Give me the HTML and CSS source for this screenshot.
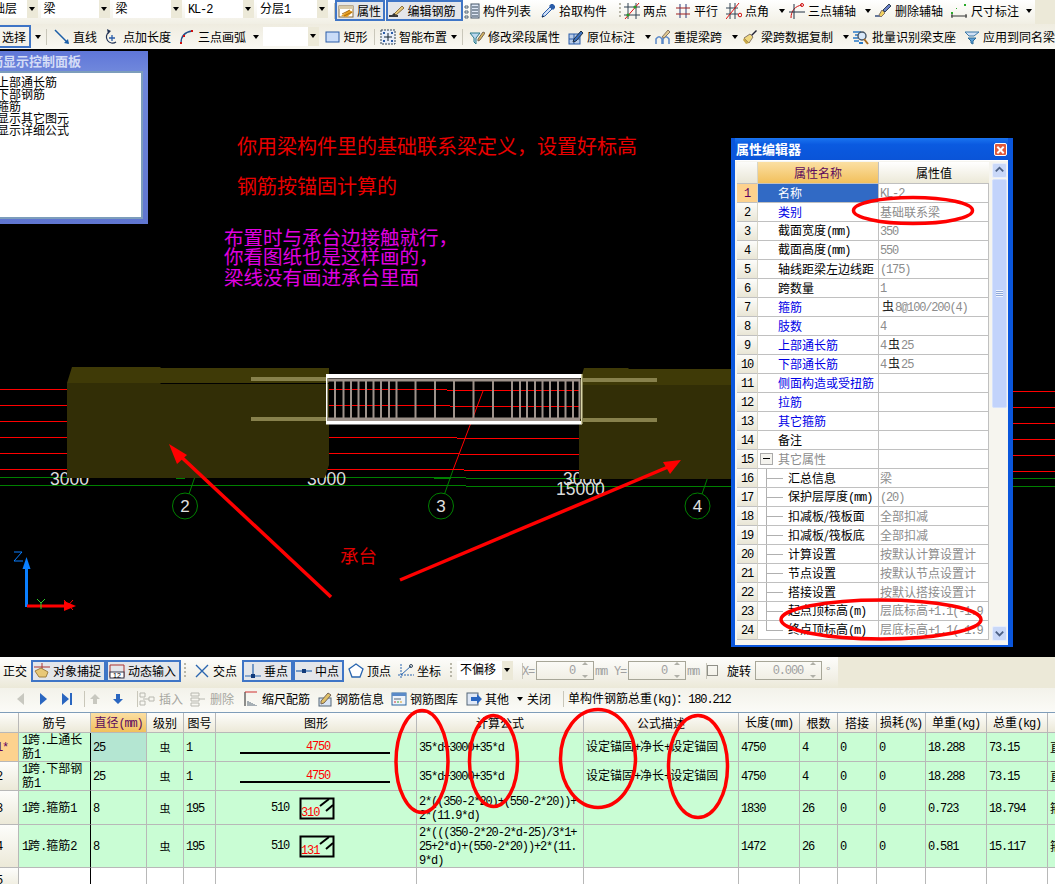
FILE: index.html
```html
<!DOCTYPE html>
<html lang="zh">
<head>
<meta charset="utf-8">
<title>钢筋编辑</title>
<link rel="stylesheet" href="styles.css">
</head>
<body>
<div class="page">

<div class="bar bar1"><div class="tools tools1">
  <div class="combo"><span class="combo-text shift">基础层</span><i class="drop"></i></div>
  <div class="combo"><span class="combo-text">梁</span><i class="drop"></i></div>
  <div class="combo"><span class="combo-text">梁</span><i class="drop"></i></div>
  <div class="combo"><span class="combo-text"><span class="n">KL-2</span></span><i class="drop"></i></div>
  <div class="combo"><span class="combo-text">分层<span class="n">1</span></span><i class="drop"></i></div>
  <i class="sep"></i>
  <div class="ti btn"><svg class="ic" viewBox="0 0 16 16"><rect x="1" y="3" width="14" height="11" fill="#fff" stroke="#8a6d3b"/><path d="M1 3h14v3H1z" fill="#d8c9a8"/><path d="M3 13l8-6 4 2-6 5z" fill="#e8a020"/><path d="M4 11l8-4M6 13l8-4" stroke="#a86a10"/></svg><span>属性</span></div>
  <div class="ti btn"><svg class="ic" viewBox="0 0 16 16"><path d="M0 13h9" stroke="#000" stroke-width="1.5"/><path d="M5 11l8-8 2 2-8 7z" fill="#e8c878" stroke="#8a7040"/><path d="M3 12l2-2 2 2z" fill="#333"/></svg><span>编辑钢筋</span></div>
  <div class="ti"><svg class="ic" viewBox="0 0 16 16"><path d="M1 3h3v2H1zM1 8h3v2H1zM1 13h3v2H1z" fill="none" stroke="#567"/><rect x="7" y="1" width="8" height="14" fill="#dfe8f6" stroke="#456"/><path d="M8 4h6M8 7h6M8 10h6M8 13h6" stroke="#345"/></svg><span>构件列表</span></div>
  <div class="ti"><svg class="ic" viewBox="0 0 16 16"><path d="M2 14l1-3 7-7 2 2-7 7z" fill="#cfe0f8" stroke="#2a5ca8"/><path d="M9 3l2-2h2l2 2v2l-2 2z" fill="#2a5ca8"/><path d="M2 14l2-1" stroke="#123"/></svg><span>拾取构件</span></div>
  <i class="grip"></i>
  <div class="ti"><svg class="ic" viewBox="0 0 16 16"><path d="M4 0v16M12 0v16M0 4h16M0 12h16" stroke="#345" fill="none"/><path d="M1 16L15 0" stroke="#e01010"/><circle cx="4" cy="12" r="1.6" fill="#2a9a2a"/><circle cx="11" cy="4" r="1.6" fill="#2a9a2a"/></svg><span>两点</span></div>
  <div class="ti"><svg class="ic" viewBox="0 0 16 16"><path d="M5 1v14M11 1v14" stroke="#2a3a7a" fill="none"/><path d="M1 5h14M1 11h14" stroke="#a02020" fill="none"/></svg><span>平行</span></div>
  <div class="ti"><svg class="ic" viewBox="0 0 16 16"><path d="M4 0v16M9 0v16M0 5h12M0 11h12" stroke="#345" fill="none"/><path d="M0 16L13 0" stroke="#e01010"/><circle cx="14" cy="12" r="1.8" fill="none" stroke="#d01010"/></svg><span>点角</span></div>
  <i class="caret"></i>
  <div class="ti"><svg class="ic" viewBox="0 0 16 16"><path d="M2 15C2 8 6 3 13 2" stroke="#d01010" fill="none"/><path d="M5 1v15M0 9h16" stroke="#234" fill="none"/><circle cx="13" cy="2" r="1.5" fill="none" stroke="#d01010"/></svg><span>三点辅轴</span></div>
  <i class="caret"></i>
  <div class="ti"><svg class="ic ic-w" viewBox="0 0 16 16"><path d="M0 13h7" stroke="#679" stroke-width="2"/><path d="M4 12l3-5 3 3-4 4z" fill="#f0d060" stroke="#876"/><path d="M8 7l6-6 2 2-6 6z" fill="#6a80c8" stroke="#345"/></svg><span>删除辅轴</span></div>
  <div class="ti"><svg class="ic ic-w" viewBox="0 0 16 16"><path d="M0 13h16M1 11v4M15 11v4" stroke="#333" fill="none"/><path d="M0 9h2v2H0zM13 1h2v2h-2zM5 5h1v1H5z" fill="#2aaa2a"/></svg><span>尺寸标注</span></div>
  <i class="caret"></i>
</div></div>

<div class="bar bar2"><div class="tools tools2">
  <div class="ti btn btn-sel"><span>选择</span></div>
  <i class="caret"></i>
  <i class="sep"></i>
  <div class="ti"><svg class="ic" viewBox="0 0 16 16"><path d="M1 1l13 13" stroke="#1c5fa8" stroke-width="1.5"/><path d="M15 15l-1-5-4 4z" fill="#1c5fa8"/></svg><span>直线</span></div>
  <div class="ti"><svg class="ic" viewBox="0 0 16 16"><path d="M12 13A6 6 0 1 1 5 3" fill="none" stroke="#235" stroke-width="1.2"/><path d="M3 0l4 2-3 3z" fill="#235"/><path d="M8 6v6M5 9h6" stroke="#2a5ca8" stroke-width="1.3"/></svg><span>点加长度</span></div>
  <div class="ti"><svg class="ic" viewBox="0 0 16 16"><path d="M2 14C2 7 6 3 13 2" fill="none" stroke="#23508a" stroke-width="1.3"/><rect x="1" y="13" width="2" height="2" fill="#d01010"/><rect x="12" y="1" width="2" height="2" fill="#d01010"/><rect x="4" y="6" width="2" height="2" fill="#d01010"/></svg><span>三点画弧</span></div>
  <i class="caret"></i>
  <div class="combo combo-mid"><span class="combo-text"></span><i class="drop"></i></div>
  <div class="ti"><svg class="ic" viewBox="0 0 16 16"><rect x="1" y="3" width="13" height="10" fill="#c9dcf8" stroke="#2a5ca8"/></svg><span>矩形</span></div>
  <i class="sep"></i>
  <div class="ti"><svg class="ic" viewBox="0 0 16 16"><rect x="1" y="1" width="14" height="14" fill="#e8eef8" stroke="#345" stroke-dasharray="2 1"/><path d="M8 4v8M4 8h8" stroke="#123"/><path d="M3 3h2v2H3zM11 3h2v2h-2zM3 11h2v2H3zM11 11h2v2h-2z" fill="#2a5ca8"/></svg><span>智能布置</span></div>
  <i class="caret"></i>
  <i class="sep"></i>
  <div class="ti"><svg class="ic" viewBox="0 0 16 16"><path d="M1 4h10L7 9v6l-2-2V9z" fill="#bcd8f0" stroke="#2a7a8a"/><path d="M9 10l5-7 2 1-5 7-2 1z" fill="#d8b860" stroke="#765"/></svg><span>修改梁段属性</span></div>
  <div class="ti"><svg class="ic" viewBox="0 0 16 16"><rect x="1" y="5" width="11" height="10" fill="#b8cce8" stroke="#2a5ca8"/><path d="M1 10h11M6 5v10" stroke="#2a5ca8"/><path d="M6 10l7-8 2 2-7 8-3 1z" fill="#3a70c0" stroke="#234"/></svg><span>原位标注</span></div>
  <i class="caret"></i>
  <div class="ti"><svg class="ic" viewBox="0 0 16 16"><path d="M1 15v-5c2-3 4-3 6 0v5M8 15v-5c2-3 4-3 6 0v5" fill="none" stroke="#5a88c8" stroke-width="1.5"/><path d="M7 8l6-7 2 2-6 6z" fill="#e0c890" stroke="#876"/></svg><span>重提梁跨</span></div>
  <i class="caret"></i>
  <div class="ti"><svg class="ic" viewBox="0 0 16 16"><path d="M9 6l5-5 1 1-5 5z" fill="#223"/><path d="M2 9l6-4 3 3-4 6z" fill="#f0d880" stroke="#876"/><path d="M2 9l5 5-3 1-3-4z" fill="#c8a848"/></svg><span>梁跨数据复制</span></div>
  <i class="caret"></i>
  <div class="ti"><svg class="ic" viewBox="0 0 16 16"><path d="M0 3h8M2 6h5M0 9h5M1 12h5" stroke="#2a7ac8" stroke-width="1.4"/><circle cx="9" cy="7" r="4" fill="#d8e8f8" stroke="#456" stroke-width="1.4"/><path d="M11 10l4 5" stroke="#a86a20" stroke-width="2"/><path d="M6 14h4" stroke="#2a7ac8" stroke-width="2"/></svg><span>批量识别梁支座</span></div>
  <div class="ti"><svg class="ic" viewBox="0 0 16 16"><path d="M1 3h14l-5 4H5z" fill="#cfe0f4" stroke="#3a78a8"/><path d="M4 9h8l-3 3v3l-2-1v-2z" fill="#5aa0d8" stroke="#2a6a98"/></svg><span>应用到同名梁</span></div>
</div></div>

<div class="canvas">
  <svg class="scene" viewBox="0 49 1055 607">
    <g stroke="#f00" fill="none">
      <path d="M0 389.500h68M0 405.500h68M0 421.500h68M0 437.500h68M0 453.500h68M0 469.500h68"/>
      <path d="M329 389.500h118M447 390.500h132M329 405.500h121M450 406.500h129"/>
      <path d="M329 437.500h128M457 438.500h122M329 453.500h131M460 454.500h119M326 469.500h138M464 470.500h115"/>
      <path d="M1013 391.500h42M1013 407.500h42M1013 423.500h42M1013 439.500h42M1013 455.500h42M1013 471.500h42"/>
      <path d="M483 391L453 470"/>
    </g>
    <g stroke="#008000" fill="none">
      <path d="M0 477.500h466M466 478.500h589M0 485.500h466M466 486.500h589"/>
      <path d="M453 470L444.500 494M194.500 478L189 494M707.500 478L702 494"/>
      <ellipse cx="185" cy="506" rx="12.500" ry="13"/>
      <ellipse cx="441" cy="506" rx="12.500" ry="13"/>
      <ellipse cx="697.500" cy="506" rx="12.500" ry="13"/>
      <path d="M176 478h9M434 478h17M689 478h9" stroke-width="2"/>
    </g>
    <g class="dim">
      <text x="50" y="485">3000</text>
      <text x="307" y="485">3000</text>
      <text x="563" y="485">3000</text>
      <text x="556" y="495">15000</text>
    </g>
    <g class="axisnum">
      <text x="185" y="512">2</text>
      <text x="441" y="512">3</text>
      <text x="697.500" y="512">4</text>
    </g>
    <path d="M67 383L72 367H160L161 368H329V383Z" fill="#3f3a07"/>
    <path d="M67 383H160L161 384H329V465L324.500 478H67Z" fill="#322e06"/>
    <path d="M579 385L584 368H628L629 369H731V385Z" fill="#3f3a07"/>
    <path d="M579 385H731V479H579Z" fill="#322e06"/>
    <path d="M251 377h75v4h-75zM251 417h75v4h-75z" fill="#87814c"/>
    <path d="M583 378h74v4h-74zM583 418h74v4h-74z" fill="#87814c"/>
    <g stroke="#9d928a" stroke-width="2">
      <path d="M335 379v40M343.500 379v40M351 379v40M358.500 379v40M366 379v40M373.500 379v40M381 379v40M389 379v40M396.500 379v40M415.500 379v40M435 379v40M454 379v40M473.500 379v40M493 379v40M512 379v40M520 379v40M527 379v40M535 379v40M542.500 379v40M550 379v40M558 379v40M565.500 379v40M573 379v40M579.500 379v40"/>
    </g>
    <path d="M328 378.500h252v3h-252zM328 417.500h252v3.500h-252z" fill="#9d928a"/>
    <path d="M326 374h256v4h-256zM326 421h256v3.500h-256z" fill="#fff"/>
    <path d="M326 374h1.500v50h-1.500z" fill="#fff"/>
    <path d="M581 374h1.500v50h-1.500z" fill="#d8d4a8"/>
    <path class="arrow" d="M331 597L176 452"/>
    <path class="arrow" d="M400 580L668 467"/>
    <path class="head" d="M169 444L187 455L177 464Z"/>
    <path class="head" d="M681 460L663 462L670 474Z"/>
    <text class="red-note" x="237" y="154">你用梁构件里的基础联系梁定义，设置好标高</text>
    <text class="red-note" x="237" y="194">钢筋按锚固计算的</text>
    <text class="pink-note" x="224" y="245">布置时与承台边接触就行，</text>
    <text class="pink-note" x="224" y="264">你看图纸也是这样画的，</text>
    <text class="pink-note" x="224" y="285">梁线没有画进承台里面</text>
    <text class="red-small" x="340" y="563">承台</text>
    <path d="M26.500 607V565" stroke="#0a7fff" stroke-width="3"/>
    <path d="M26.500 557l-4 12h8z" fill="#0a7fff"/>
    <path d="M27 606h40" stroke="#f00" stroke-width="3"/>
    <path d="M76 606l-12-5v10z" fill="#f00"/>
    <path d="M14 552h8l-8 9h9" stroke="#0a7fff" fill="none"/>
    <path d="M37 599l4 4 4-4M41 603v6" stroke="#2ad02a" fill="none"/>
    <path d="M64 600l9 10M73 600l-9 10" stroke="#f00" fill="none"/>
  </svg>

  <aside class="rebar-panel">
    <h2 class="rebar-title">筋显示控制面板</h2>
    <ul class="rebar-list">
      <li>上部通长筋</li><li>下部钢筋</li><li>箍筋</li><li>显示其它图元</li><li>显示详细公式</li>
    </ul>
  </aside>

  <section class="props">
    <header class="props-title"><span>属性编辑器</span><i class="close"></i></header>
    <div class="props-body">
      <table class="ptable">
        <thead><tr><th class="pn"></th><th class="phead-on">属性名称</th><th class="phead">属性值</th></tr></thead>
        <tbody>
          <tr><th class="pn pn-on"><span class="n">1</span></th><td class="name sel">名称</td><td class="val"><span class="n">KL-2</span></td></tr>
          <tr><th class="pn"><span class="n">2</span></th><td class="name blue">类别</td><td class="val">基础联系梁</td></tr>
          <tr><th class="pn"><span class="n">3</span></th><td class="name">截面宽度<span class="n">(mm)</span></td><td class="val"><span class="n">350</span></td></tr>
          <tr><th class="pn"><span class="n">4</span></th><td class="name">截面高度<span class="n">(mm)</span></td><td class="val"><span class="n">550</span></td></tr>
          <tr><th class="pn"><span class="n">5</span></th><td class="name">轴线距梁左边线距</td><td class="val"><span class="n">(175)</span></td></tr>
          <tr><th class="pn"><span class="n">6</span></th><td class="name">跨数量</td><td class="val"><span class="n">1</span></td></tr>
          <tr><th class="pn"><span class="n">7</span></th><td class="name blue">箍筋</td><td class="val"><b class="bar-sym">虫</b><span class="n">8@100/200(4)</span></td></tr>
          <tr><th class="pn"><span class="n">8</span></th><td class="name blue">肢数</td><td class="val"><span class="n">4</span></td></tr>
          <tr><th class="pn"><span class="n">9</span></th><td class="name blue">上部通长筋</td><td class="val"><span class="n">4</span><b class="bar-sym">虫</b><span class="n">25</span></td></tr>
          <tr><th class="pn"><span class="n">10</span></th><td class="name blue">下部通长筋</td><td class="val"><span class="n">4</span><b class="bar-sym">虫</b><span class="n">25</span></td></tr>
          <tr><th class="pn"><span class="n">11</span></th><td class="name blue">侧面构造或受扭筋</td><td class="val"></td></tr>
          <tr><th class="pn"><span class="n">12</span></th><td class="name blue">拉筋</td><td class="val"></td></tr>
          <tr><th class="pn"><span class="n">13</span></th><td class="name blue">其它箍筋</td><td class="val"></td></tr>
          <tr><th class="pn"><span class="n">14</span></th><td class="name">备注</td><td class="val"></td></tr>
          <tr><th class="pn"><span class="n">15</span></th><td class="name group"><i class="minus"></i>其它属性</td><td class="val"></td></tr>
          <tr><th class="pn"><span class="n">16</span></th><td class="name tree">汇总信息</td><td class="val">梁</td></tr>
          <tr><th class="pn"><span class="n">17</span></th><td class="name tree">保护层厚度<span class="n">(mm)</span></td><td class="val"><span class="n">(20)</span></td></tr>
          <tr><th class="pn"><span class="n">18</span></th><td class="name tree">扣减板/筏板面</td><td class="val">全部扣减</td></tr>
          <tr><th class="pn"><span class="n">19</span></th><td class="name tree">扣减板/筏板底</td><td class="val">全部扣减</td></tr>
          <tr><th class="pn"><span class="n">20</span></th><td class="name tree">计算设置</td><td class="val">按默认计算设置计</td></tr>
          <tr><th class="pn"><span class="n">21</span></th><td class="name tree">节点设置</td><td class="val">按默认节点设置计</td></tr>
          <tr><th class="pn"><span class="n">22</span></th><td class="name tree">搭接设置</td><td class="val">按默认搭接设置计</td></tr>
          <tr><th class="pn"><span class="n">23</span></th><td class="name tree">起点顶标高<span class="n">(m)</span></td><td class="val">层底标高<span class="n">+1.1(-1.9</span></td></tr>
          <tr><th class="pn"><span class="n">24</span></th><td class="name tree tree-last">终点顶标高<span class="n">(m)</span></td><td class="val">层底标高<span class="n">+1.1(-1.9</span></td></tr>
        </tbody>
      </table>
      <div class="scroll">
        <div class="sbtn"><svg viewBox="0 0 14 14"><path d="M3 8l4-4 4 4" fill="none" stroke="#4d6185" stroke-width="2"/></svg></div>
        <div class="thumb"><i></i></div>
        <div class="sbtn sbtn-end"><svg viewBox="0 0 14 14"><path d="M3 5l4 4 4-4" fill="none" stroke="#4d6185" stroke-width="2"/></svg></div>
      </div>
    </div>
  </section>
</div>

<div class="bar bar3"><div class="tools tools3">
  <div class="ti pad"><span>正交</span></div>
  <div class="ti btn"><svg class="ic" viewBox="0 0 16 16"><path d="M8 0v14M0 4h16" stroke="#a33" fill="none"/><path d="M1 8l6-3 7 4-2 5H5z" fill="#e8c878" stroke="#a08040"/></svg><span>对象捕捉</span></div>
  <div class="ti btn"><svg class="ic" viewBox="0 0 16 16"><path d="M1 2h14M1 2v12M15 2v12" stroke="#a33" fill="none"/><rect x="1" y="9" width="14" height="6" fill="#fff" stroke="#334"/><text class="ic-text" x="4" y="14.500">12</text></svg><span>动态输入</span></div>
  <i class="grip"></i>
  <div class="ti"><svg class="ic" viewBox="0 0 16 16"><path d="M2 2l12 12M14 2L2 14" stroke="#2a66b0" stroke-width="1.4"/></svg><span>交点</span></div>
  <div class="ti btn"><svg class="ic" viewBox="0 0 16 16"><path d="M0 13h16M8 1v12" stroke="#2a66b0" stroke-width="1.2"/><rect x="6" y="11" width="4" height="4" fill="#123a7a"/></svg><span>垂点</span></div>
  <div class="ti btn btn-narrow"><svg class="ic" viewBox="0 0 16 16"><path d="M0 8h16" stroke="#2a66b0" stroke-width="1.2"/><rect x="6" y="6" width="4" height="4" fill="#123a7a"/></svg><span>中点</span></div>
  <div class="ti"><svg class="ic" viewBox="0 0 16 16"><path d="M8 1l7 5-3 8H4L1 6z" fill="#fff" stroke="#2a66b0" stroke-width="1.3"/></svg><span>顶点</span></div>
  <div class="ti"><svg class="ic" viewBox="0 0 16 16"><path d="M3 1v14M0 12h16" stroke="#2a66b0" stroke-dasharray="2 1" fill="none"/><path d="M3 12l10-9" stroke="#2a66b0" fill="none"/><circle cx="13" cy="3" r="1.500" fill="none" stroke="#345"/></svg><span>坐标</span></div>
  <i class="grip"></i>
  <div class="combo combo-mid"><span class="combo-text">不偏移</span><i class="drop"></i></div>
  <i class="sep"></i>
  <span class="gray"><span class="n">X=</span></span>
  <div class="spin"><span class="n">0</span><i class="spin-btn"></i></div>
  <span class="gray"><span class="n">mm</span></span>
  <span class="gray"><span class="n">Y=</span></span>
  <div class="spin"><span class="n">0</span><i class="spin-btn"></i></div>
  <span class="gray"><span class="n">mm</span></span>
  <i class="sep"></i>
  <i class="check"></i>
  <span class="label">旋转</span>
  <div class="spin"><span class="n">0.000</span><i class="spin-btn"></i></div>
  <span class="gray deg">°</span>
</div></div>

<div class="bar bar4"><div class="tools tools4">
  <svg class="nav" viewBox="0 0 10 12"><path d="M8 0v12L1 6z" fill="#c8c8c0"/></svg>
  <svg class="nav" viewBox="0 0 10 12"><path d="M1 0v12l7-6z" fill="#2a66c0"/></svg>
  <svg class="nav" viewBox="0 0 10 12"><path d="M0 0v12l7-6zM8 0h2v12H8z" fill="#2a66c0"/></svg>
  <i class="sep"></i>
  <svg class="nav" viewBox="0 0 10 12"><path d="M5 1l5 5H7v5H3V6H0z" fill="#c8c8c0"/></svg>
  <svg class="nav" viewBox="0 0 10 12"><path d="M5 11l5-5H7V1H3v5H0z" fill="#2a66c0"/></svg>
  <i class="sep"></i>
  <div class="ti off"><svg class="ic ic-l" viewBox="0 0 16 16"><path d="M1 2h5v4H1zM1 10h5v4H1z" fill="none" stroke="#b8b8b0"/><path d="M4 8h6M10 6h5v4h-5z" fill="none" stroke="#b8b8b0"/></svg><span>插入</span></div>
  <div class="ti off"><svg class="ic ic-l" viewBox="0 0 16 16"><path d="M1 2h8v3H1zM1 7h8v3H1zM1 12h8v3H1z" fill="none" stroke="#b8b8b0"/><path d="M9 8h6" stroke="#b8b8b0"/></svg><span>删除</span></div>
  <div class="ti"><svg class="ic" viewBox="0 0 16 16"><path d="M2 1v14" stroke="#222"/><path d="M2 1h12" stroke="#d03030"/><path d="M5 15v-5M7 15v-4M9 15v-3M11 15v-2M13 15v-1" stroke="#567"/></svg><span>缩尺配筋</span></div>
  <div class="ti"><svg class="ic" viewBox="0 0 16 16"><rect x="2" y="7" width="12" height="8" fill="#d8e4f4" stroke="#567"/><path d="M4 10l7-8 3 2-7 8-3 1z" fill="#e0c068" stroke="#765"/></svg><span>钢筋信息</span></div>
  <div class="ti"><svg class="ic" viewBox="0 0 16 16"><rect x="1" y="2" width="14" height="12" fill="#eef3fa" stroke="#2a66a0"/><path d="M1 2h14v3H1z" fill="#5a8ac8"/><path d="M3 8h7" stroke="#567"/><path d="M3 11h2" stroke="#c33"/><path d="M6 11h2" stroke="#3a3"/><path d="M9 11h2" stroke="#e0a020"/></svg><span>钢筋图库</span></div>
  <div class="ti"><svg class="ic" viewBox="0 0 16 16"><rect x="1" y="2" width="11" height="12" fill="#dfe8f6" stroke="#567"/><path d="M5 6h6V3l5 5-5 5v-3H5z" fill="#2a66c0"/></svg><span>其他</span></div>
  <i class="caret"></i>
  <span class="label">关闭</span>
  <i class="sep"></i>
  <span class="label">单构件钢筋总重<span class="n">(kg)</span>：<span class="n">180.212</span></span>
</div></div>

<table class="grid">
  <colgroup><col class="c0"><col class="c1"><col class="c2"><col class="c3"><col class="c4"><col class="c5"><col class="c6"><col class="c7"><col class="c8"><col class="c9"><col class="c10"><col class="c11"><col class="c12"><col class="c13"><col class="c14"></colgroup>
  <thead><tr class="r-h">
    <th></th><th>筋号</th><th class="on">直径<span class="n">(mm)</span></th><th>级别</th><th>图号</th><th>图形</th><th>计算公式</th><th>公式描述</th><th>长度<span class="n">(mm)</span></th><th>根数</th><th>搭接</th><th>损耗<span class="n">(%)</span></th><th>单重<span class="n">(kg)</span></th><th>总重<span class="n">(kg)</span></th><th></th>
  </tr></thead>
  <tbody>
    <tr class="r1">
      <th class="rh rh-on"><span class="n">1*</span></th><td class="freeze"><span class="n">1</span>跨<span class="n">.</span>上通长<br>筋<span class="n">1</span></td><td class="cur"><span class="n">25</span></td><td class="mid bar-sym-cell">虫</td><td><span class="n">1</span></td>
      <td class="fig"><div class="fig-line"><span class="n fig-len">4750</span></div></td>
      <td class="f"><span class="n">35*d+3000+35*d</span></td><td class="desc">设定锚固<span class="n">+</span>净长<span class="n">+</span>设定锚固</td><td><span class="n">4750</span></td><td><span class="n">4</span></td><td><span class="n">0</span></td><td><span class="n">0</span></td><td><span class="n">18.288</span></td><td><span class="n">73.15</span></td><td class="last">直筋</td>
    </tr>
    <tr class="r2">
      <th class="rh"><span class="n">2</span></th><td class="freeze"><span class="n">1</span>跨<span class="n">.</span>下部钢<br>筋<span class="n">1</span></td><td><span class="n">25</span></td><td class="mid bar-sym-cell">虫</td><td><span class="n">1</span></td>
      <td class="fig"><div class="fig-line"><span class="n fig-len">4750</span></div></td>
      <td class="f"><span class="n">35*d+3000+35*d</span></td><td class="desc">设定锚固<span class="n">+</span>净长<span class="n">+</span>设定锚固</td><td><span class="n">4750</span></td><td><span class="n">4</span></td><td><span class="n">0</span></td><td><span class="n">0</span></td><td><span class="n">18.288</span></td><td><span class="n">73.15</span></td><td class="last">直筋</td>
    </tr>
    <tr class="r3">
      <th class="rh"><span class="n">3</span></th><td class="freeze"><span class="n">1</span>跨<span class="n">.</span>箍筋<span class="n">1</span></td><td><span class="n">8</span></td><td class="mid bar-sym-cell">虫</td><td><span class="n">195</span></td>
      <td class="fig"><div class="stir"><span class="n stir-num">510</span><svg class="stir-svg" viewBox="0 0 36 24"><path d="M1.500 2.500h33v20h-33z" fill="none" stroke="#000" stroke-width="2"/><path d="M21 10l9-7M27 15l7-6" stroke="#000" stroke-width="2" fill="none"/><text class="stir-red" x="2" y="20">310</text></svg></div></td>
      <td class="f"><span class="n">2*((350-2*20)+(550-2*20))+<br>2*(11.9*d)</span></td><td></td><td><span class="n">1830</span></td><td><span class="n">26</span></td><td><span class="n">0</span></td><td><span class="n">0</span></td><td><span class="n">0.723</span></td><td><span class="n">18.794</span></td><td class="last">箍筋</td>
    </tr>
    <tr class="r4">
      <th class="rh"><span class="n">4</span></th><td class="freeze"><span class="n">1</span>跨<span class="n">.</span>箍筋<span class="n">2</span></td><td><span class="n">8</span></td><td class="mid bar-sym-cell">虫</td><td><span class="n">195</span></td>
      <td class="fig"><div class="stir"><span class="n stir-num">510</span><svg class="stir-svg" viewBox="0 0 36 24"><path d="M1.500 2.500h33v20h-33z" fill="none" stroke="#000" stroke-width="2"/><path d="M21 10l9-7M27 15l7-6" stroke="#000" stroke-width="2" fill="none"/><text class="stir-red" x="2" y="20">131</text></svg></div></td>
      <td class="f"><span class="n">2*(((350-2*20-2*d-25)/3*1+<br>25+2*d)+(550-2*20))+2*(11.<br>9*d)</span></td><td></td><td><span class="n">1472</span></td><td><span class="n">26</span></td><td><span class="n">0</span></td><td><span class="n">0</span></td><td><span class="n">0.581</span></td><td><span class="n">15.117</span></td><td class="last">箍筋</td>
    </tr>
    <tr class="r5">
      <th class="rh"><span class="n">5</span></th><td class="freeze"></td><td></td><td></td><td></td><td></td><td></td><td></td><td></td><td></td><td></td><td></td><td></td><td></td><td></td>
    </tr>
  </tbody>
</table>

<svg class="marks" viewBox="0 0 1055 884">
  <ellipse cx="913" cy="210.500" rx="59.500" ry="13"/>
  <ellipse cx="881" cy="619.500" rx="100" ry="19.500"/>
  <ellipse cx="422" cy="761.500" rx="26" ry="51"/>
  <ellipse cx="493.500" cy="761" rx="24" ry="45.500"/>
  <ellipse cx="598" cy="758.500" rx="37.500" ry="49"/>
  <ellipse cx="698" cy="766.500" rx="29.500" ry="51"/>
</svg>

</div>
</body>
</html>
```

FILE: styles.css
```css
* { box-sizing: border-box; }
html, body { margin: 0; padding: 0; background: #000; }
body { width: 1055px; height: 884px; overflow: hidden; font: 12px/14px "Noto Sans CJK SC", "Noto Sans", sans-serif; color: #000; }
.page { position: relative; width: 1055px; height: 884px; overflow: hidden; display: flex; flex-direction: column; background: #fff; }
.n { font-family: "Liberation Mono", monospace; font-size: 12px; letter-spacing: -1.15px; }
i { display: block; font-style: normal; }

.bar { flex: none; background: #ece9d8; overflow: hidden; }
.bar1 { height: 24px; }
.bar2 { height: 25px; background: linear-gradient(#efece0, #f9f8f2); }
.bar3 { height: 32px; border-top: 1px solid #000; }
.bar4 { height: 25px; background: linear-gradient(#f3f2ea, #fbfbf7); border-bottom: 1px solid #7f9db9; }
.tools { display: grid; align-items: center; width: max-content; }
.tools1 { height: 24px; margin-left: -40px; align-items: start; background: linear-gradient(#ffffff, #f1efe4);
  grid-template-columns: 80.5px 72px 72.5px 72px 74px 4px 50.5px 78.5px 76px 76px 8px 51px 51px 48px 15px 71px 15px 76px 72px 12px; }
.tools2 { height: 25px; margin-left: -20px; grid-template-columns: 53px 10px 11px 50px 75px 70px 14px 61.5px 46px 9.5px 68px 11px 10px 99px 72px 15px 72px 15px 96px 15px 111px 130px; }
.tools3 { height: 31px; padding-bottom: 4px; background: linear-gradient(#fdfdfb, #f1efe5 70%, #ece9d8); grid-template-columns: 31px 75px 75px 13px 48px 51px 55px 50px 49px 10px 62px 3px 14px 59px 19px 14px 59px 16px 4px 20px 28px 68px 15px; }
.tools4 { height: 24px; padding-left: 16px; padding-bottom: 2px; grid-template-columns: 23px 23px 19px 9px 23px 21px 5px 51px 53px 74px 74px 75px 47px 14px 33px 8px 300px; }

.ti { display: flex; align-items: center; white-space: nowrap; height: 20px; }
.tools1 .ti { margin-top: 3px; height: 16px; }
.ic { width: 16px; height: 16px; margin-right: 3px; flex: none; }
.ic-w { margin-right: 4px; }
.ic-l { margin-right: 4px; }
.ic-text { font: 7px "Liberation Sans", sans-serif; }
.pad { padding-left: 3px; }
.btn { height: 22px; padding-left: 1px; background: #e4e6ea; border: 2px solid #3f75c6; }
.tools1 .btn { height: 21px; margin-top: 0; width: calc(100% - 1px); }
.btn-sel { justify-content: flex-end; padding-right: 3px; height: 23px; margin-right: 2px; background: linear-gradient(#f5f4ee, #f3f1e8); }
.btn-narrow { margin-right: 4px; }
.off { color: #a6a6a0; }
.sep { width: 1px; height: 16px; background: #c9c7ba; margin-left: 3px; }
.grip { width: 2px; height: 16px; margin-left: 3px; background: repeating-linear-gradient(#b9b7a9 0 2px, transparent 2px 4px); }
.tools1 .sep, .tools1 .grip { margin-top: 3px; }
.caret { width: 0; height: 0; border: 3px solid transparent; border-top: 4px solid #000; border-bottom: 0; justify-self: center; }
.tools1 .caret { margin-top: 9px; }

.combo { position: relative; height: 18px; background: #fff; margin-right: 3px; display: flex; justify-content: space-between; }
.combo-text { padding: 0 0 0 3px; line-height: 16px; white-space: nowrap; }
.shift { padding-left: 21px; }
.drop { position: relative; width: 11px; flex: none; background: #ece9d8; }
.drop::after { content: ""; position: absolute; left: 2px; top: 7px; border: 3px solid transparent; border-top: 4px solid #000; border-bottom: 0; }
.combo-mid { height: 19px; margin-right: 6px; }
.gray { color: #a0a0a0; }
.deg { padding-left: 3px; }
.label { white-space: nowrap; }
.spin { display: flex; align-items: center; justify-content: flex-end; height: 19px; padding-right: 4px; border: 1px solid #a7a698; color: #a0a0a0; width: 58px; gap: 6px; }
.tools3 > .spin:nth-last-child(2) { width: 67px; }
.spin-btn { width: 8px; height: 13px; position: relative; }
.spin-btn::before, .spin-btn::after { content: ""; position: absolute; left: 1px; border: 3px solid transparent; }
.spin-btn::before { top: -2px; border-bottom: 3px solid #b0b0a8; border-top: 0; }
.spin-btn::after { bottom: -1px; border-top: 3px solid #b0b0a8; border-bottom: 0; }
.check { width: 11px; height: 11px; border: 1px solid #909088; }
.nav { width: 10px; height: 12px; }

.canvas { position: relative; flex: none; height: 607px; background: #000; overflow: hidden; }
.scene { position: absolute; inset: 0; width: 1055px; height: 607px; display: block; }
.dim text { font: 17.5px "Liberation Sans", sans-serif; fill: #dcdcdc; }
.axisnum text { font: 17px "Liberation Sans", sans-serif; fill: #e0e0e0; text-anchor: middle; }
.red-note { font: 20px "Noto Sans CJK SC", sans-serif; fill: #e80000; }
.pink-note { font: 19.500px "Noto Sans CJK SC", sans-serif; fill: #e000e0; }
.red-small { font: 18.500px "Noto Sans CJK SC", sans-serif; fill: #e00000; }
.arrow { fill: none; stroke: #f00; stroke-width: 3.500; }
.head { fill: #f00; }

.rebar-panel { position: absolute; left: -20px; top: 2px; width: 168px; height: 173px; padding: 0 5px 5px 5px; background: linear-gradient(#5f76d8, #7088dc 12%, #6076d0); display: flex; flex-direction: column; }
.rebar-title { margin: 0; height: 20px; padding-left: 5px; font: bold 13px/20px "Noto Sans CJK SC", sans-serif; color: #d4dcf6; white-space: nowrap; }
.rebar-list { list-style: none; margin: 0; padding: 3px 0 0 10px; flex: 1; background: #fff; border: 2px solid #7c9dbb; font-size: 12px; line-height: 12px; }

.props { position: absolute; left: 731px; top: 89px; width: 282px; height: 509px; padding: 0 5px 2px 4px; background: #0a56dc; display: flex; flex-direction: column; }
.props-title { flex: none; height: 22px; display: flex; justify-content: space-between; align-items: center; padding: 0 1px; background: linear-gradient(#1a74f0, #0a5ae0 30%, #0a54d8); color: #fff; font: bold 13px/20px "Noto Sans CJK SC", sans-serif; }
.close { width: 13px; height: 13px; margin-top: 1px; border-radius: 2px; background: #e25a3a; border: 1px solid #fff; position: relative; }
.close::before, .close::after { content: ""; position: absolute; left: 1px; top: 4.500px; width: 9px; height: 2px; background: #fff; transform: rotate(45deg); }
.close::after { transform: rotate(-45deg); }
.props-body { flex: 1; display: flex; align-items: flex-start; background: #f6f5ef; padding: 1px 0 0 2px; border-top: 1px solid #fff; }
.ptable { width: 252px; flex: none; table-layout: fixed; border-collapse: separate; border-spacing: 0; background: #fff; }
.ptable th, .ptable td { height: 19px; padding: 0; border-right: 1px solid #c0c0c0; border-bottom: 1px solid #c0c0c0; font-weight: normal; line-height: 16px; white-space: nowrap; overflow: hidden; text-align: left; }
.ptable thead th { height: 22px; text-align: center; }
.ptable th.pn { width: 21px; text-align: center; background: linear-gradient(#fcfcfa, #e9e6d6); border-right-color: #d8d6c8; }
.ptable th.pn-on { background: #fdd28e; color: #5a0060; }
.ptable .phead-on { width: 121px; background: linear-gradient(#fbdfa3, #f2c05c); color: #5c0a5c; }
.ptable .phead { width: 110px; background: linear-gradient(#ffffff, #ece9d8); border-right: 0; }
.ptable .name { padding-left: 20px; position: relative; }
.ptable .val { padding-left: 1px; color: #8c8c8c; }
.ptable .sel { background: #316ac5; color: #fff; }
.ptable .blue { color: #0000e6; }
.ptable .group { color: #8c8c8c; }
.minus { position: absolute; left: 2px; top: 3px; width: 13px; height: 12px; border: 1px solid #aaa; background: #f4f3ee; }
.minus::before { content: ""; position: absolute; left: 2px; right: 2px; top: 4px; height: 1px; background: #000; }
.ptable .tree { padding-left: 30px; }
.tree::before { content: ""; position: absolute; left: 8px; top: -1px; bottom: -1px; border-left: 1px solid #b0b0b0; }
.tree::after { content: ""; position: absolute; left: 8px; top: 9px; width: 17px; border-top: 1px solid #b0b0b0; }
.tree-last::before { bottom: 9px; }
.bar-sym { font-weight: normal; font-size: 12px; color: #222; padding: 0 1px 0 2px; }
.scroll { flex: none; width: 15px; height: 478px; margin: 1px 0 0 3px; display: flex; flex-direction: column; }
.sbtn { height: 15px; flex: none; background: #c9d8f8; border: 1px solid #e8eefc; border-radius: 2px; }
.sbtn svg { display: block; width: 13px; height: 13px; }
.thumb { height: 229px; margin-top: 1px; background: #c2d3fb; border: 1px solid #d6e2fc; border-radius: 2px; display: flex; align-items: center; justify-content: center; }
.thumb i { width: 7px; height: 7px; background: repeating-linear-gradient(#eef3fe 0 1px, #8fa8d8 1px 2px); }
.sbtn-end { margin-top: auto; }

.grid { flex: none; margin-left: -20px; table-layout: fixed; border-collapse: separate; border-spacing: 0; width: 1095px; background: #fff; }
.c0 { width: 39px; } .c1 { width: 72px; } .c2 { width: 56px; } .c3 { width: 37px; } .c4 { width: 32px; } .c5 { width: 201px; } .c6 { width: 167px; } .c7 { width: 155px; } .c8 { width: 61px; } .c9 { width: 38px; } .c10 { width: 39px; } .c11 { width: 49px; } .c12 { width: 61px; } .c13 { width: 61px; } .c14 { width: 27px; }
.grid th, .grid td { padding: 0 0 0 2px; border-right: 1px solid #b8b8b8; border-bottom: 1px solid #b8b8b8; font-weight: normal; line-height: 12px; text-align: left; overflow: hidden; white-space: nowrap; }
.grid thead th { text-align: center; padding: 0; background: linear-gradient(#fdfdfb, #ece9d8); }
.grid thead th.on { background: linear-gradient(#fbdfa3, #f2c05c); color: #5c0a5c; }
.r-h { height: 20px; }
.r1 { height: 28px; } .r2 { height: 29px; } .r3 { height: 34px; } .r4 { height: 41px; } .r5 { height: 24px; }
.grid tbody tr:not(.r5) td { background: #c9fdd4; }
.grid tbody tr.r1 td.cur { background: #b4e6d2; }
.grid .rh { padding-left: 16px; background: linear-gradient(#fdfdfb, #ece9d8); }
.grid .rh-on { background: #fdd28e; color: #5a0060; }
.grid .freeze { border-right: 1px solid #000; padding-left: 3px; }
.grid .mid { text-align: center; padding: 0; }
.bar-sym-cell { font-size: 11px; }
.grid .fig { padding: 0; }
.fig-line { width: 150px; margin: 0 0 0 24px; padding-left: 6px; height: 14px; border-bottom: 2px solid #000; text-align: center; line-height: 10px; }
.fig-len { color: #f00; }
.stir { display: flex; align-items: center; padding-left: 55px; height: 24px; }
.stir-num { width: 28px; }
.stir-svg { width: 36px; height: 24px; display: block; }
.stir-red { font: 12px "Liberation Mono", monospace; letter-spacing: -1.1px; fill: #f00; }
.desc { padding-left: 2px; }
.grid .last { padding-left: 2px; }

.marks { position: absolute; inset: 0; width: 1055px; height: 884px; pointer-events: none; }
.marks ellipse { fill: none; stroke: #f00; stroke-width: 3.500; }
```
